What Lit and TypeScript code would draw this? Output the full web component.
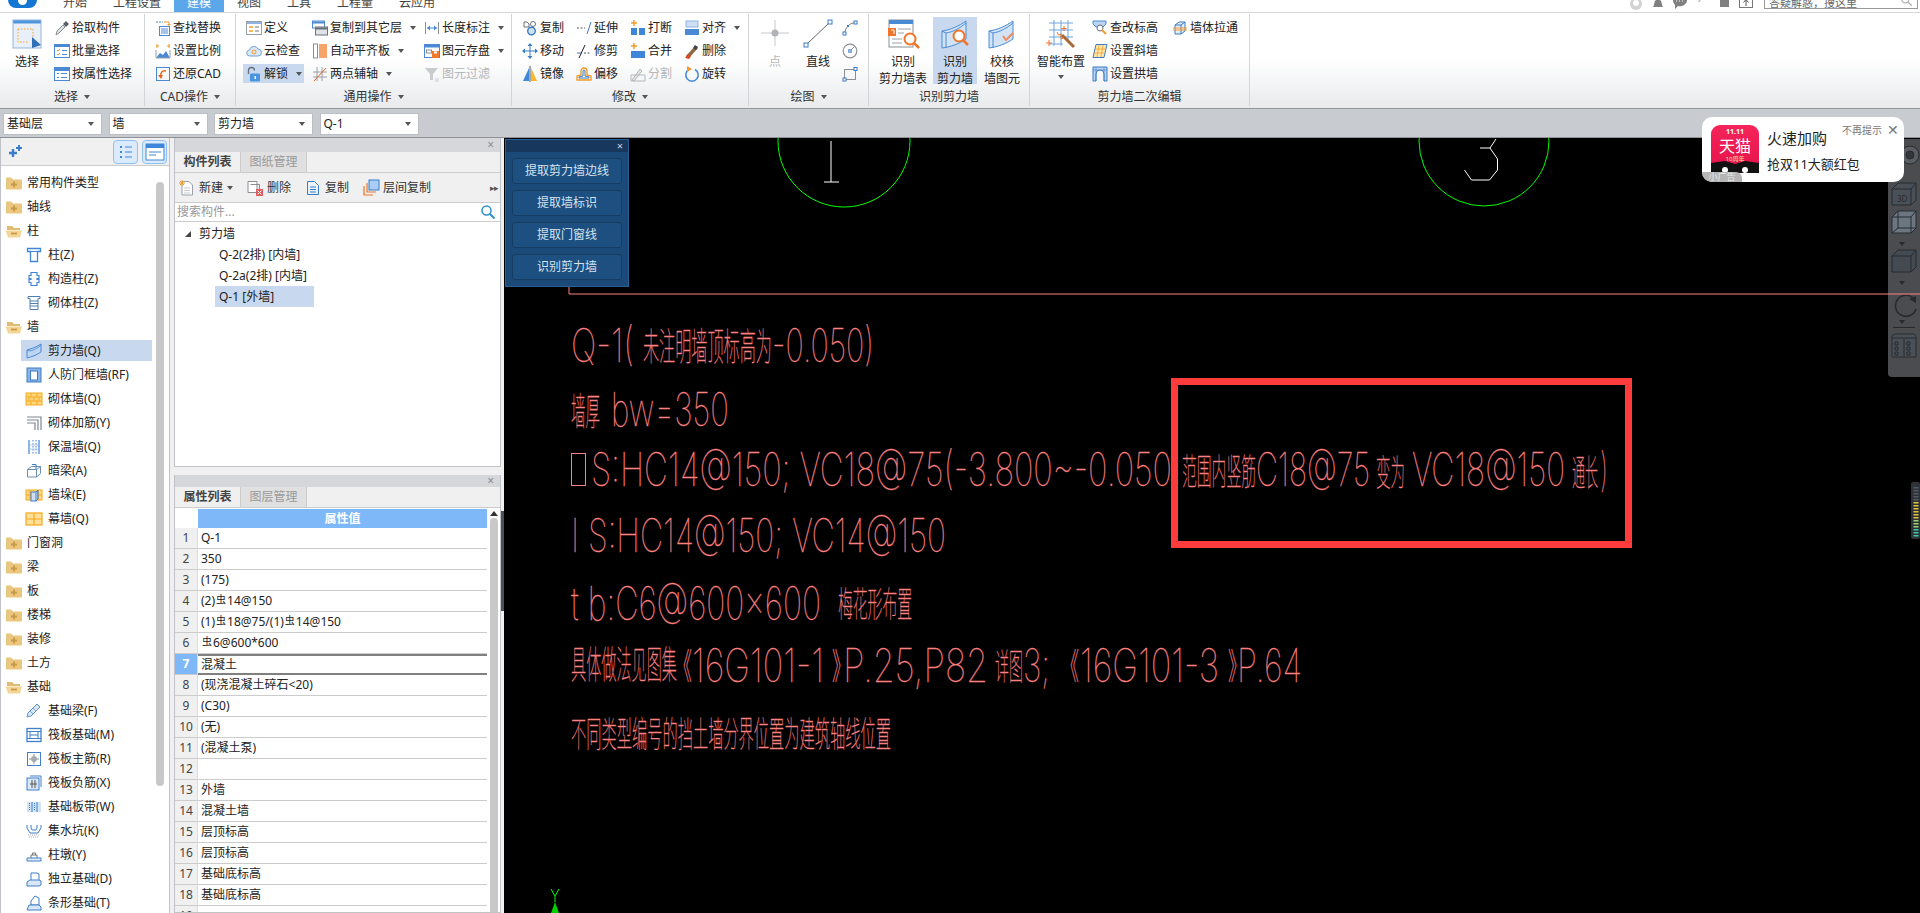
import { LitElement, html, css, svg, TemplateResult } from 'lit';
import { customElement } from 'lit/decorators.js';

const ICONS: Record<string, TemplateResult> = {
    pick: svg`<path d="M2 15l1-4 6-6 2 2-6 6z" fill="#dfe3e8" stroke="#8a8f96"/><path d="M9 4l3-3 3 3-3 3z" fill="#5a5f66"/>`,
    batch: svg`<rect x=".5" y="1.5" width="15" height="13" fill="#fff" stroke="#4a8ad4"/><rect x="1" y="2" width="14" height="2" fill="#4a8ad4"/><path d="M3 7l1 1 2-2M3 11l1 1 2-2" stroke="#f39a2c" fill="none"/><path d="M8 7.5h5M8 11.5h5" stroke="#4a8ad4"/>`,
    attr: svg`<rect x=".5" y="1.5" width="15" height="13" fill="#fff" stroke="#4a8ad4"/><rect x="1" y="2" width="14" height="3" fill="#4a8ad4"/><path d="M3 7.5h2M3 11.5h2M7 7.5h6M7 11.5h6" stroke="#4a8ad4"/>`,
    find: svg`<path d="M1 2h7" stroke="#4a8ad4" stroke-dasharray="2 1"/><path d="M9 2h5v3" stroke="#f39a2c" fill="none"/><path d="M12 4l2 2 2-2" fill="#f39a2c"/><rect x="4.5" y="6.5" width="10" height="9" fill="#fff" stroke="#4a8ad4"/><path d="M6 9h7M6 11h7M6 13h7" stroke="#4a8ad4"/>`,
    scale: svg`<path d="M2 1v4M14 1v4M1 3h3M12 3h3" stroke="#f39a2c"/><path d="M1 15l4-5 3 2 3-4 4 7z" fill="#4a8ad4"/><path d="M1 7v8h14V7" fill="none" stroke="#9aa0a8"/>`,
    restore: svg`<rect x="1.5" y="1.5" width="13" height="13" fill="none" stroke="#4a8ad4"/><path d="M11 5c-4-1-6 2-5 6" fill="none" stroke="#e8641c" stroke-width="1.5"/><path d="M3 9l3 4 2-4z" fill="#e8641c"/>`,
    define: svg`<rect x=".5" y="1.5" width="15" height="13" fill="#fff" stroke="#9aa0a8"/><rect x="1" y="2" width="14" height="2" fill="#8fb4e3"/><rect x="3" y="6" width="4" height="2" fill="#f5b65c"/><rect x="3" y="10" width="4" height="2" fill="#f5b65c"/><path d="M9 7h4M9 11h4" stroke="#777"/>`,
    cloud: svg`<path d="M4 13a3 3 0 0 1-.5-6 4.5 4.5 0 0 1 8.5-1 3.5 3.5 0 0 1 0 7z" fill="#dbe8f7" stroke="#6ea3de"/><circle cx="8" cy="9" r="2" fill="none" stroke="#f39a2c"/>`,
    lock: svg`<path d="M2.5 8V4.5a3 3 0 0 1 6 0" fill="none" stroke="#66717d" stroke-width="1.3"/><rect x="4" y="7.5" width="10" height="8" rx="1" fill="#4a95e0"/><rect x="8.5" y="10" width="1.5" height="3" fill="#fff"/>`,
    copyfloor: svg`<rect x=".5" y="1" width="12" height="7" fill="#fff" stroke="#4a8ad4"/><rect x="1" y="1.5" width="11" height="2" fill="#4a8ad4"/><rect x="3.5" y="7" width="12" height="8" fill="#dfe3e8" stroke="#6b7178"/><rect x="4" y="7.5" width="11" height="2" fill="#6b7178"/>`,
    level: svg`<rect x="1.5" y="1" width="4" height="14" fill="#fff" stroke="#8a8f96"/><rect x="7" y="1" width="8" height="14" fill="#f7a46a"/>`,
    twoaxis: svg`<path d="M1 6h14M1 11h14" stroke="#9aa0a8"/><path d="M5 1v14M10 1v14" stroke="#9aa0a8"/><path d="M2 15L14 2" stroke="#e8641c"/>`,
    dim: svg`<path d="M1.5 2v12M14.5 2v12" stroke="#8a8f96"/><path d="M3 8h10" stroke="#4a8ad4"/><path d="M6 5.5L3 8l3 2.5zM10 5.5L13 8l-3 2.5z" fill="#4a8ad4"/>`,
    save: svg`<rect x=".5" y="1.5" width="15" height="13" fill="#fff" stroke="#4a8ad4"/><rect x="1" y="2" width="14" height="2.5" fill="#4a8ad4"/><rect x="2.5" y="7" width="5" height="3" fill="none" stroke="#8a8f96"/><rect x="8" y="8" width="7" height="7" fill="#f07a2a"/><rect x="10" y="8.5" width="3" height="2" fill="#fff"/>`,
    funnel: svg`<path d="M1 2h13L9 8v6H6V8z" fill="#c9cbce"/><path d="M11 13h4M11 15h4" stroke="#c9cbce"/>`,
    copy: svg`<path d="M2 2h3l2 2v3H2z" fill="none" stroke="#6b7178"/><circle cx="11" cy="4" r="2.5" fill="none" stroke="#6b7178"/><circle cx="9.5" cy="11" r="3.8" fill="#cfe0f5" stroke="#3a7cc8" stroke-width="1.4"/>`,
    move: svg`<path d="M8 2v12M2 8h12" stroke="#3a7cc8"/><path d="M8 0l2.5 3h-5zM8 16l2.5-3h-5zM0 8l3-2.5v5zM16 8l-3-2.5v5z" fill="#3a7cc8"/>`,
    mirror: svg`<path d="M7 2v13H1z" fill="#3f86d8"/><path d="M9 2v13h6z" fill="#f8b62b"/><path d="M8 0v16" stroke="#555"/>`,
    extend: svg`<path d="M1 8h8" stroke="#555" stroke-dasharray="2 1.5"/><path d="M11 14l4-12" stroke="#3a7cc8"/>`,
    trim: svg`<path d="M1 10h5" stroke="#3a7cc8"/><path d="M8 10h7" stroke="#555" stroke-dasharray="2 1.5"/><path d="M3 15l6-13" stroke="#222"/>`,
    offset: svg`<path d="M1 14V10l4-1V5a3 3 0 0 1 6 0v4l4 1v4z" fill="#fff6dd" stroke="#f39a2c" stroke-width="1.3"/><path d="M3 12v-1l4-1V5a1 1 0 0 1 2 0v5l4 1v1z" fill="none" stroke="#3a7cc8"/>`,
    breakit: svg`<path d="M4 0v6M1 3h6" stroke="#f39a2c" stroke-width="1.5"/><rect x="1" y="8" width="6" height="7" fill="#3f86d8"/><rect x="9" y="8" width="6" height="7" fill="#3f86d8"/>`,
    merge: svg`<path d="M4 0v6M1 3h6" stroke="#f39a2c" stroke-width="1.5"/><rect x="1" y="8" width="14" height="7" fill="#3f86d8"/>`,
    split: svg`<path d="M2 14l8-11 2 2-8 10z" fill="#e3e4e6" stroke="#b5b7ba"/><path d="M1 9h14v6H1z" fill="none" stroke="#b5b7ba"/>`,
    align: svg`<rect x="2" y="1" width="12" height="6" fill="#cfe0f5" stroke="#8fb4e3"/><rect x="1" y="9" width="14" height="6" fill="#4a8ad4"/>`,
    erase: svg`<path d="M2 13l9-10 3 2-9 10z" fill="#8a6a48"/><path d="M9 5l2-3 3 2-2 3z" fill="#444"/><path d="M1 15l3-4 3 2-2 3z" fill="#d8481f"/>`,
    rotate: svg`<path d="M5 3.5a6.2 6.2 0 1 0 6 0" fill="none" stroke="#3f86d8" stroke-width="1.5"/><path d="M3 0l5 3-5 3z" fill="#f39a2c"/>`,
    smallarc: svg`<path d="M2.5 14C3 8 7 3 13.5 2.5" fill="none" stroke="#777"/><rect x="1" y="12" width="3" height="3" fill="#fff" stroke="#3a7cc8"/><rect x="12" y="1" width="3" height="3" fill="#fff" stroke="#3a7cc8"/><rect x="5" y="5" width="2" height="2" fill="#3a7cc8"/>`,
    smallcircle: svg`<circle cx="8" cy="8" r="6.8" fill="none" stroke="#8a8f96" stroke-width="1.2"/><path d="M8 8l4-4" stroke="#8a8f96"/><rect x="6.8" y="6.8" width="2.4" height="2.4" fill="#fff" stroke="#3a7cc8"/>`,
    smallrect: svg`<rect x="2.5" y="3.5" width="11" height="10" fill="none" stroke="#8a8f96"/><rect x="12" y="1.5" width="3" height="3" fill="#fff" stroke="#3a7cc8"/><rect x="1" y="12" width="3" height="3" fill="#fff" stroke="#3a7cc8"/>`,
    editlevel: svg`<path d="M1 1h13v3l-3 3H4L1 4z" fill="#bcd5f2" stroke="#4a8ad4"/><circle cx="8" cy="8" r="3" fill="#fff" stroke="#6b7178"/><path d="M10 10l4 4" stroke="#f39a2c" stroke-width="2"/>`,
    slant: svg`<path d="M4 1.5h11l-3 13H1z" fill="#ffe7a8" stroke="#3a7cc8"/><path d="M3 6h10M2 10h10M7 2L5 14M11 2l-2 12" stroke="#f39a2c" stroke-width=".7"/>`,
    arch: svg`<path d="M1 1h14v14h-3V8a4 4 0 0 0-8 0v7H1z" fill="#bcd5f2" stroke="#3a7cc8"/><path d="M4 1v14M12 1v14M1 4h14" stroke="#3a7cc8" stroke-width=".6"/>`,
    pull: svg`<path d="M3 5l4-3h6v9l-4 3H3z" fill="#e6eef9" stroke="#3a7cc8"/><path d="M3 5h6v9M9 5l4-3" fill="none" stroke="#3a7cc8"/><path d="M1 8h14M1 10h14" stroke="#f39a2c"/>`,
    search: svg`<circle cx="6.5" cy="6.5" r="4.5" fill="none" stroke="#2f8ecb" stroke-width="1.5"/><path d="M10 10l4.5 4.5" stroke="#2f8ecb" stroke-width="2"/>`,
    searchgray: svg`<circle cx="6.5" cy="6.5" r="4.5" fill="none" stroke="#aaa" stroke-width="1.3"/><path d="M10 10l4.5 4.5" stroke="#aaa" stroke-width="1.5"/>`,
    newdoc: svg`<path d="M3 1.5h7l3.5 3.5v10H3z" fill="#fff" stroke="#9aa0a8"/><path d="M5 8h6M5 10.5h6M5 13h6" stroke="#c9cbce"/><path d="M3 0v6M0 3h6M1 1l4 4M5 1L1 5" stroke="#f39a2c"/>`,
    deldoc: svg`<path d="M1 1.5h9v11H1z" fill="#fff" stroke="#8a8f96"/><path d="M3.5 4.5h9v9" fill="none" stroke="#8a8f96"/><rect x="9" y="9" width="7" height="7" fill="#e25b5b"/><path d="M10.5 10.5l4 4M14.5 10.5l-4 4" stroke="#fff"/>`,
    copydoc: svg`<path d="M2.5 1.5h7l4 4v9h-11z" fill="#eaf2fb" stroke="#3a7cc8"/><path d="M5 7h6M5 9.5h6M5 12h6" stroke="#3a7cc8"/>`,
    floorcopy: svg`<rect x="6" y="0" width="10" height="10" fill="#a9cdf5" stroke="#3a7cc8"/><path d="M4 3v9h9M1 6v9h9" fill="none" stroke="#e8742a" stroke-width="1.2"/>`,
    closed: svg`<path d="M0 3.5a1 1 0 0 1 1-1h4l2 2h8a1 1 0 0 1 1 1v8a1 1 0 0 1-1 1H1a1 1 0 0 1-1-1z" fill="#eac67e"/><path d="M8 6.5v6M5 9.5h6" stroke="#c89a45" stroke-width="1.8"/>`,
    open: svg`<path d="M1 3h5l2 2h6v2H1z" fill="#e2bb72"/><path d="M-.5 7.5h15l1.5-.5-2 7.5H2z" fill="#f3d596"/><path d="M5 10.5h6" stroke="#c89a45" stroke-width="1.8"/>`,
    column: svg`<path d="M1.5 1.5h13v3h-3v10h-7v-10h-3z" fill="#fff" stroke="#3f86d8" stroke-width="1.3"/><path d="M4.5 4.5h7" stroke="#3f86d8"/>`,
    gouzao: svg`<path d="M5 1.5h6v3h2v3h-2v1h2v3h-2v3H5v-3H3v-3h2v-1H3v-3h2z" fill="#fff" stroke="#3f86d8" stroke-width="1.2"/>`,
    brickcol: svg`<path d="M2 1.5h12v2h-2v11H4v-11H2z" fill="#fff" stroke="#4f7fae"/><path d="M4 6h8M4 8.5h8M4 11h8" stroke="#4f7fae"/>`,
    shear: svg`<path d="M1 7c3-1 10-3 14-6v8c-4 3-10 5-14 6z" fill="#bcd5f2" stroke="#4a8ad4"/><path d="M1 7l3 1c4-1 8-3 11-6" fill="none" stroke="#4a8ad4" stroke-width=".8"/>`,
    defwall: svg`<rect x="1" y="1" width="14" height="14" fill="#8fb4e3" stroke="#3a7cc8"/><rect x="4.5" y="4" width="7" height="9" fill="#fff" stroke="#3a7cc8"/>`,
    brickwall: svg`<rect x="0" y="2" width="16" height="12" fill="#ffd67e" stroke="#f5a81c"/><path d="M0 6h16M0 10h16M5 2v4M11 2v4M8 6v4M3 6v4M13 6v4M5 10v4M11 10v4" stroke="#f5a81c"/>`,
    rebarwall: svg`<path d="M1 2h14v13M1 5h11v10M1 8h8v7" fill="none" stroke="#7d8790" stroke-width="1.2"/>`,
    insul: svg`<path d="M3 1v14M13 1v14" stroke="#3f86d8" stroke-width="1.2"/><path d="M7 1v14M10 1v14" stroke="#3f86d8" stroke-dasharray="1.5 1.5"/><path d="M3 6h10M3 10h10" stroke="#8fb4e3" stroke-width=".7"/>`,
    beam: svg`<path d="M1.5 6.5l4-3h9v7l-4 3.5h-9z" fill="#fff" stroke="#6b8fb4"/><path d="M1.5 6.5h9V14M10.5 6.5l4-3" fill="none" stroke="#6b8fb4"/><path d="M6 1.5l4 0v5" stroke="#3a7cc8" fill="none"/>`,
    duo: svg`<rect x="0" y="3" width="16" height="10" fill="#ffd67e" stroke="#f5a81c"/><path d="M4 3v10M12 3v10M0 8h16" stroke="#f5a81c"/><rect x="5" y="5" width="5" height="9" fill="#cfe0f5" stroke="#3a7cc8"/><path d="M10 5l2-2v9l-2 2" fill="#8fb4e3" stroke="#3a7cc8"/>`,
    curtain: svg`<rect x="0" y="2" width="16" height="12" fill="#ffe09a" stroke="#f5a81c" stroke-width="1.2"/><path d="M0 8h16M8 2v12" stroke="#f5a81c" stroke-width="1.2"/>`,
    found: svg`<path d="M2 10L11 1l3 3-9 9-4 1z" fill="#d9e7f7" stroke="#5a94d8"/><path d="M4 8l3 3M7 5l3 3" stroke="#5a94d8" stroke-width=".7"/>`,
    raft: svg`<rect x="1" y="1.5" width="14" height="13" fill="none" stroke="#3f7fcb" stroke-width="1.3"/><rect x="4" y="4.5" width="8" height="7" fill="none" stroke="#3f7fcb"/><path d="M1 4.5h3M12 4.5h3M1 11.5h3M12 11.5h3M4 8h8" stroke="#3f7fcb"/>`,
    raftmain: svg`<rect x="1.5" y="1.5" width="13" height="13" fill="#fff" stroke="#3f7fcb"/><path d="M8 3v10M3 8h10" stroke="#8a8f96"/><path d="M6 6h4v4H6z" fill="none" stroke="#8a8f96"/>`,
    raftneg: svg`<rect x="1" y="3" width="12" height="12" fill="#d9e7f7" stroke="#3f7fcb"/><path d="M4 1h11v11" fill="none" stroke="#3f7fcb"/><path d="M4 9h7M6 5v8M9 5v8" stroke="#555"/>`,
    strip: svg`<rect x="1" y="3" width="14" height="10" fill="#d3e3f6"/><path d="M6 3v10M11 3v10" stroke="#3f7fcb"/><path d="M8.5 4v8" stroke="#3f7fcb" stroke-dasharray="1 1"/><path d="M3.5 4v8" stroke="#3f7fcb" stroke-dasharray="1 1"/>`,
    pit: svg`<path d="M1 2v3l3 5h8l3-5V2M5 2v3l1 2h4l1-2V2" fill="none" stroke="#3f7fcb"/><path d="M2 12h12M3 14h10" stroke="#aaa" stroke-dasharray="1 1"/>`,
    pier: svg`<path d="M1 11h14v3H1z" fill="#e5eefa" stroke="#3f7fcb"/><path d="M5 11V8h6v3M6.5 8V6h3v2" fill="none" stroke="#777"/>`,
    isolated: svg`<path d="M5 2h6l2 1v7H5z" fill="#fff" stroke="#3f7fcb"/><path d="M1 11l3-2h9l2 1v4l-2 1H1z" fill="#d9e7f7" stroke="#3f7fcb"/>`,
    stripf: svg`<path d="M5 6l4-5 4 2v7H5z" fill="#fff" stroke="#3f7fcb"/><path d="M1 15l2-5h10l2 2v3z" fill="#d9e7f7" stroke="#3f7fcb"/>`,
    spark: svg`<path d="M2 9h8M6 5v8" stroke="#3a7cc8" stroke-width="2.4"/><path d="M9 4h6M12 1v6" stroke="#3a7cc8" stroke-width="2"/>`,
    listview: svg`<path d="M4 5h2M4 10h2M4 15h2" stroke="#3f86d8" stroke-width="2"/><path d="M9 5h7M9 10h7M9 15h7" stroke="#3f86d8" stroke-width="1.2"/>`,
    formview: svg`<rect x="1" y="2" width="18" height="16" fill="#fff" stroke="#3f86d8"/><rect x="1" y="2" width="18" height="4" fill="#3f86d8"/><path d="M4 10h12M4 13h7" stroke="#3f86d8"/>`,
    person: svg`<circle cx="8" cy="9" r="6" fill="#d2d2d2"/><circle cx="8" cy="8" r="3" fill="#fff"/>`,
    bell: svg`<path d="M3 12c1-1 1-4 2-6s5-2 6 0 1 5 2 6z" fill="#808080"/>`,
    chat: svg`<path d="M1 6a7 6 0 0 1 14 0 7 6 0 0 1-9 5l-3 3v-4a6 6 0 0 1-2-4z" fill="#808080"/><path d="M4 6h8" stroke="#fff" stroke-dasharray="1 2"/>`,
    help: svg`<path d="M2 2c1-2 5-2 5 1 0 2-2 2-2 4" fill="none" stroke="#bbb" stroke-width="1.5"/><path d="M9 1h6l-3 4z" fill="#888"/>`,
    note: svg`<rect x="4" y="0" width="9" height="12" fill="#808080"/>`,
    upload: svg`<rect x="1.5" y="1.5" width="13" height="11" fill="#fff" stroke="#777"/><path d="M8 11V5M5.5 7.5L8 4.5l2.5 3" fill="none" stroke="#555"/>`,
};

const BIG: Record<string, TemplateResult> = {
    select: svg`<rect x="1" y="1" width="28" height="28" fill="#e9eff8"/><rect x="1" y="1" width="28" height="3.5" fill="#4d96de"/><rect x="1" y="1" width="28" height="28" fill="none" stroke="#93b5de"/><path d="M6 10h15v13" fill="none" stroke="#f5a623" stroke-dasharray="1.5 1.5"/><path d="M6 10v13h10" fill="none" stroke="#f5a623" stroke-dasharray="1.5 1.5"/><path d="M20 18l9 8-9 3z" fill="#2f6fb8"/>`,
    point: svg`<path d="M15 1v26M1 14h28" stroke="#c6c8cb"/><circle cx="15" cy="14" r="3.5" fill="#b0b2b5"/>`,
    line: svg`<path d="M3 26L27 3" stroke="#666"/><rect x="1" y="24" width="4" height="4" fill="#fff" stroke="#3a7cc8"/><rect x="25" y="1" width="4" height="4" fill="#fff" stroke="#3a7cc8"/>`,
    table: svg`<rect x="1" y="1" width="24" height="27" fill="#fff" stroke="#8a8f96"/><rect x="1" y="1" width="24" height="4" fill="#4a8ad4"/><rect x="0" y="9" width="8" height="8" fill="#f0742a"/><path d="M3 11h3v4" stroke="#fff" fill="none"/><path d="M10 10h13M10 14h6M4 20h10M4 24h10" stroke="#9aa0a8"/><circle cx="22" cy="20" r="5.5" fill="#fff" stroke="#f0742a" stroke-width="2"/><path d="M26 24l5 5" stroke="#f0742a" stroke-width="2.5"/>`,
    wall: svg`<path d="M2 12c8-1 17-5 24-10v18c-7 5-16 8-24 9z" fill="#d3e3f6" stroke="#4a8ad4"/><path d="M2 12l4 2c7-1 14-5 20-10M6 14v15" fill="none" stroke="#4a8ad4"/><circle cx="19" cy="17" r="5.5" fill="#fff" stroke="#f0742a" stroke-width="2"/><path d="M23 21l5 5" stroke="#f0742a" stroke-width="2.5"/>`,
    check: svg`<path d="M2 12c8-1 17-5 24-10v18c-7 5-16 8-24 9z" fill="#d3e3f6" stroke="#4a8ad4"/><path d="M2 12l4 2c7-1 14-5 20-10M6 14v15" fill="none" stroke="#4a8ad4"/><path d="M16 17l3 4 7-7" fill="none" stroke="#f08a5a" stroke-width="2"/>`,
    smart: svg`<path d="M3 4h24M3 11h24M3 18h24M3 25h14M8 1v26M15 1v26M22 1v20" stroke="#6fa5df"/><path d="M16 16l12 12" stroke="#a56a35" stroke-width="3"/><path d="M11 13l1.5 3 3-1-1 3 3 1-3 1" fill="none" stroke="#f0742a"/><path d="M3 21v6M0 24h6M18 7v5M15.5 9.5h5" stroke="#f0742a"/>`,
};

const ic = (name: string) => html`<svg class="ic" viewBox="0 0 16 16">${ICONS[name]}</svg>`;
const big = (name: string) => html`<svg class="bigic" viewBox="0 0 30 30">${BIG[name]}</svg>`;
const caret = html`<i class="caret"></i>`;

interface Tool { icon: string; label: string; arrow?: boolean; off?: boolean; hot?: boolean }
const tool = (t: Tool) => html`<div class="tool ${t.off ? 'off' : ''} ${t.hot ? 'hot' : ''}">
    ${ic(t.icon)}<span>${t.label}</span>${t.arrow ? caret : ''}
</div>`;
const stack = (tools: Tool[]) => html`<div class="stack">${tools.map(tool)}</div>`;
const bigBtn = (icon: string, lines: string[], cls = '') => html`<div class="big ${cls}">
    ${big(icon)}${lines.map((l) => html`<span>${l}</span>`)}
</div>`;

const TREE: [string, string, string][] = [
    ['closed', 'closed', '常用构件类型'], ['closed', 'closed', '轴线'], ['open', 'open', '柱'],
    ['child', 'column', '柱(Z)'], ['child', 'gouzao', '构造柱(Z)'], ['child', 'brickcol', '砌体柱(Z)'],
    ['open', 'open', '墙'], ['child active', 'shear', '剪力墙(Q)'], ['child', 'defwall', '人防门框墙(RF)'],
    ['child', 'brickwall', '砌体墙(Q)'], ['child', 'rebarwall', '砌体加筋(Y)'], ['child', 'insul', '保温墙(Q)'],
    ['child', 'beam', '暗梁(A)'], ['child', 'duo', '墙垛(E)'], ['child', 'curtain', '幕墙(Q)'],
    ['closed', 'closed', '门窗洞'], ['closed', 'closed', '梁'], ['closed', 'closed', '板'],
    ['closed', 'closed', '楼梯'], ['closed', 'closed', '装修'], ['closed', 'closed', '土方'],
    ['open', 'open', '基础'], ['child', 'found', '基础梁(F)'], ['child', 'raft', '筏板基础(M)'],
    ['child', 'raftmain', '筏板主筋(R)'], ['child', 'raftneg', '筏板负筋(X)'], ['child', 'strip', '基础板带(W)'],
    ['child', 'pit', '集水坑(K)'], ['child', 'pier', '柱墩(Y)'], ['child', 'isolated', '独立基础(D)'],
    ['child', 'stripf', '条形基础(T)'],
];

const bar = html`<span class="rebar">虫</span>`;
const PROPS: unknown[] = [
    'Q-1', '350', '(175)', html`(2)${bar}14@150`, html`(1)${bar}18@75/(1)${bar}14@150`, html`${bar}6@600*600`,
    '混凝土', '(现浇混凝土碎石<20)', '(C30)', '(无)', '(混凝土泵)', '', '外墙', '混凝土墙', '层顶标高',
    '层顶标高', '基础底标高', '基础底标高', '',
];

// [text, x0, x1, baseline, font size, cjk]
const CAD: [string, number, number, number, number, boolean][] = [
    ['Q-1(', 571, 634, 362, 46, false],
    ['未注明墙顶标高为', 643, 772, 360, 38, true],
    ['-0.050)', 772, 874, 362, 46, false],
    ['墙厚', 571, 600, 425, 38, true],
    ['bw=350', 611, 729, 426, 46, false],
    ['S:HC14@150; VC18@75(-3.800~-0.050', 591, 1172, 486, 46, false],
    ['范围内竖筋', 1182, 1256, 485, 36, true],
    ['C18@75', 1256, 1370, 486, 46, false],
    ['变为', 1376, 1405, 486, 36, true],
    ['VC18@150', 1412, 1565, 486, 46, false],
    ['通长', 1572, 1598, 486, 36, true],
    [')', 1600, 1608, 486, 46, false],
    ['I S:HC14@150; VC14@150', 571, 946, 552, 46, false],
    ['t b:C6@600x600', 571, 821, 620, 46, false],
    ['梅花形布置', 838, 912, 617, 35, true],
    ['具体做法见图集', 571, 677, 678, 38, true],
    ['《', 674, 692, 680, 36, true],
    ['16G101-1', 692, 824, 682, 46, false],
    ['》', 832, 850, 680, 36, true],
    ['P.25,P82', 843, 988, 682, 46, false],
    ['详图', 995, 1023, 680, 36, true],
    ['3;', 1023, 1050, 682, 46, false],
    ['《', 1061, 1079, 680, 36, true],
    ['16G101-3', 1080, 1219, 682, 46, false],
    ['》', 1228, 1246, 680, 36, true],
    ['P.64', 1237, 1302, 682, 46, false],
    ['不同类型编号的挡土墙分界位置为建筑轴线位置', 571, 891, 747, 35, true],
];

@customElement('app-root')
export class AppRoot extends LitElement {
    static override styles = css`
        :host {
            display: block;
            position: relative;
            width: 1920px;
            height: 913px;
            overflow: hidden;
            font: 12px/16px "Noto Sans", "Noto Sans CJK SC", sans-serif;
            color: #222;
            background: #f0f0f0;
        }
        .ic { width: 16px; height: 16px; flex: none; overflow: visible; }
        .bigic { width: 30px; height: 30px; flex: none; margin-bottom: 4px; overflow: visible; }
        .caret {
            display: inline-block;
            margin-left: 6px;
            border: 3px solid transparent;
            border-top: 4px solid #555;
            border-bottom: 0;
            flex: none;
        }

        .tabbar {
            display: flex;
            height: 12px;
            background: #fff;
            border-bottom: 1px solid #d6d6d6;
            overflow: hidden;
        }
        .logo {
            width: 29px;
            height: 8px;
            margin: 0 13px 0 8px;
            background: #1677d2;
            border-radius: 0 0 8px 8px;
            position: relative;
        }
        .logo::after {
            content: '';
            position: absolute;
            left: 10px;
            top: -4px;
            width: 9px;
            height: 9px;
            border-radius: 50%;
            background: #fff;
        }
        .tab { padding: 0 13px; line-height: 6px; height: 12px; color: #444; }
        .tab.on { background: #5ba7ea; color: #fff; }
        .tray { margin-left: auto; display: flex; gap: 6px; }
        .tray .ic { margin-top: -5px; }
        .ask {
            width: 154px;
            height: 9px;
            margin: 0 2px 0 4px;
            border: 1px solid #999;
            border-top: 0;
            box-sizing: border-box;
            padding: 0 4px;
            font-size: 11px;
            line-height: 6px;
            color: #666;
            display: flex;
            justify-content: space-between;
            white-space: nowrap;
        }
        .ask .ic { width: 13px; height: 13px; margin-top: -6px; }

        .ribbon {
            display: flex;
            height: 95px;
            background: linear-gradient(#fff 0, #fff 48%, #e8eaec 100%);
            border-bottom: 1px solid #94979b;
        }
        .group {
            box-sizing: border-box;
            border-right: 1px solid #d3d6d9;
            margin: 1px 0 2px;
            display: flex;
            flex-direction: column;
        }
        .body { display: grid; height: 74px; flex: none; padding-top: 2px; box-sizing: border-box; }
        .label {
            height: 18px;
            flex: none;
            line-height: 18px;
            display: flex;
            justify-content: center;
            align-items: center;
            color: #333;
        }
        .g1 { width: 145px; }
        .g1 .body { grid-template-columns: 54px 1fr; }
        .g2 { width: 91px; }
        .g2 .body { grid-template-columns: 1fr; padding-left: 10px; }
        .g3 { width: 276px; }
        .g3 .body { grid-template-columns: 66px 112px 1fr; padding-left: 10px; }
        .g4 { width: 237px; }
        .g4 .body { grid-template-columns: 54px 54px 54px 1fr; padding-left: 10px; }
        .g5 { width: 120px; }
        .g5 .body { grid-template-columns: 52px 34px 1fr; }
        .g5 .stack { padding-left: 7px; }
        .g6 { width: 161px; }
        .g6 .body { grid-template-columns: 52px 48px 50px; padding-left: 8px; }
        .g7 { width: 220px; }
        .g7 .body { grid-template-columns: 62px 80px 1fr; }
        .stack { display: flex; flex-direction: column; }
        .tool { display: flex; align-items: center; gap: 2px; height: 23px; white-space: nowrap; }
        .tool.off { color: #b4b6b9; }
        .tool.hot {
            position: relative;
            background: #c8d9ef;
            margin: 2px 0 0 -3px;
            padding-left: 3px;
            width: 58px;
            height: 19px;
        }
        .big {
            display: flex;
            flex-direction: column;
            align-items: center;
            padding-top: 2px;
            margin-top: 1px;
            height: 67px;
            box-sizing: border-box;
            line-height: 17px;
            white-space: nowrap;
        }
        .big.off { color: #b4b6b9; }
        .big.hot { background: #c8d9ef; margin-left: 4px; }
        .big .caret { margin: 5px 0 0; }

        .ctlbar {
            display: flex;
            gap: 6.5px;
            height: 29px;
            padding: 4px 0 0 3px;
            box-sizing: border-box;
            background: #c8ccd0;
            border-bottom: 1px solid #8f9296;
        }
        .combo {
            width: 99px;
            height: 22px;
            box-sizing: border-box;
            background: #fff;
            border: 1px solid #bbbec2;
            padding: 0 7px 0 3px;
            display: flex;
            align-items: center;
            justify-content: space-between;
        }
        .combo .caret { margin: 0; }

        .main { display: flex; height: 775px; }
        .side {
            width: 170px;
            flex: none;
            background: #fff;
            box-sizing: border-box;
            border-left: 1px solid #bfc2c6;
            border-right: 1px solid #bfc2c6;
            position: relative;
            overflow: hidden;
        }
        .sidehead {
            height: 28px;
            box-sizing: border-box;
            background: #f0f0f0;
            border-bottom: 1px solid #ccc;
            display: flex;
            align-items: center;
            padding: 0 2px 0 6px;
        }
        .viewbtn {
            width: 25px;
            height: 24px;
            box-sizing: border-box;
            border: 1px solid #8fc0f2;
            border-radius: 4px;
            background: #dcebfb;
            display: flex;
            align-items: center;
            justify-content: center;
            margin-left: 4px;
        }
        .viewbtn:first-of-type { margin-left: auto; }
        .viewbtn .ic { width: 20px; height: 20px; }
        .tree { padding-top: 5px; }
        .node { height: 24px; display: flex; align-items: center; gap: 5px; padding-left: 5px; white-space: nowrap; }
        .node.child { padding-left: 25px; gap: 6px; }
        .node.active { position: relative; }
        .node.active::before {
            content: '';
            position: absolute;
            left: 20px;
            top: 1px;
            width: 131px;
            height: 21px;
            background: #c8d9ef;
        }
        .node > * { position: relative; }
        .thumb {
            position: absolute;
            left: 155px;
            top: 44px;
            width: 8px;
            height: 604px;
            border-radius: 4px;
            background: #c8c8c8;
        }

        .mid {
            width: 334px;
            flex: none;
            padding: 0 3px 0 4px;
            box-sizing: border-box;
            display: flex;
            flex-direction: column;
            gap: 8px;
            position: relative;
        }
        .panel {
            background: #fff;
            border: 1px solid #bfc2c6;
            border-top: 0;
            display: flex;
            flex-direction: column;
            overflow: hidden;
        }
        .panel.top { height: 328px; flex: none; }
        .panel.low { flex: 1; }
        .title {
            height: 14px;
            flex: none;
            background: #d5d7da;
            color: #8a8d91;
            text-align: right;
            padding-right: 6px;
            font-size: 12px;
            line-height: 13px;
        }
        .low .title { height: 12px; line-height: 12px; }
        .tabs { display: flex; height: 21px; box-sizing: border-box; flex: none; background: #f0f0f0; border-bottom: 1px solid #ccc; }
        .ptab { width: 65px; text-align: center; line-height: 20px; font-weight: 700; color: #444; }
        .ptab.dim { background: #e0e0e0; color: #9a9a9a; font-weight: 400; border-left: 1px solid #ccc; border-right: 1px solid #ccc; }
        .ptools {
            display: flex;
            align-items: center;
            height: 30px;
            box-sizing: border-box;
            flex: none;
            background: #f0f0f0;
            border-bottom: 1px solid #ccc;
            padding-left: 4px;
            color: #333;
        }
        .ptools .tool { gap: 4px; margin-right: 14px; }
        .ptools .tool .caret { margin-left: 0; }
        .ptools .more { margin-left: auto; padding-right: 2px; font-size: 9px; color: #555; letter-spacing: -1px; }
        .psearch {
            display: flex;
            align-items: center;
            justify-content: space-between;
            height: 19px;
            flex: none;
            padding: 0 4px 0 2px;
            box-sizing: border-box;
            border-bottom: 1px solid #ccc;
            color: #999;
        }
        .ptree { padding-top: 1px; }
        .leaf { height: 21px; line-height: 21px; white-space: nowrap; }
        .leaf.root { display: flex; align-items: center; padding-left: 10px; gap: 8px; }
        .leaf.root::before { content: ''; border: 3px solid transparent; border-right-color: #444; border-bottom-color: #444; }
        .leaf.sub { padding-left: 44px; }
        .leaf.sel { width: 99px; box-sizing: border-box; margin-left: 40px; padding-left: 4px; background: #c8d9ef; }
        .grid { display: flex; flex: 1; min-height: 0; }
        .table { width: 312px; flex: none; }
        .rowh { display: grid; grid-template-columns: 23px 1fr; height: 19px; margin-top: 1px; }
        .rowh b { background: #7fb8f8; color: #fff; text-align: center; line-height: 19px; }
        .rowp { display: grid; grid-template-columns: 23px 1fr; height: 21px; box-sizing: border-box; }
        .num {
            background: #f0f0f0;
            border-bottom: 1px solid #ccc;
            border-right: 1px solid #ddd;
            text-align: center;
            line-height: 20px;
            color: #444;
        }
        .cell { border-bottom: 1px solid #ccc; padding-left: 3px; line-height: 20px; white-space: nowrap; overflow: hidden; }
        .rowp.sel .num { background: #7fb8f8; color: #fff; font-weight: 700; }
        .rowp.sel .cell { border-top: 2px solid #808080; border-bottom: 2px solid #808080; line-height: 17px; }
        .rebar { font-size: 10px; position: relative; top: -2px; padding: 0 1px; }
        .pscroll { flex: 1; position: relative; }
        .pscroll::before {
            content: '';
            position: absolute;
            left: 3px;
            top: 3px;
            border: 4px solid transparent;
            border-bottom: 5px solid #333;
            border-top: 0;
        }
        .pscroll::after {
            content: '';
            position: absolute;
            left: 3px;
            top: 10px;
            bottom: 0;
            width: 8px;
            border-radius: 4px 4px 0 0;
            background: #c8c8c8;
        }
        .grip {
            position: absolute;
            right: 0;
            top: 373px;
            width: 3px;
            height: 100px;
            background: #4b5158;
        }

        .canvas { flex: 1; background: #000; position: relative; overflow: hidden; }
        .drawing { position: absolute; left: 0; top: 0; width: 1416px; height: 775px; }
        .cad {
            fill: #ff8080;
            stroke: #ff8080;
            stroke-width: .3px;
            font-family: Inter, "Liberation Sans", sans-serif;
            font-weight: 100;
        }
        .cad.cjk { font-family: "Noto Sans CJK SC", sans-serif; font-weight: 100; }
        .float {
            position: absolute;
            left: 1px;
            top: 1px;
            width: 124px;
            height: 148px;
            box-sizing: border-box;
            background: #1c4a78;
            border: 1px solid #2a6098;
            display: flex;
            flex-direction: column;
            align-items: center;
        }
        .floathead {
            align-self: stretch;
            height: 12px;
            background: #17375c;
            color: #c8d4e0;
            text-align: right;
            padding-right: 5px;
            line-height: 12px;
            font-size: 11px;
            margin-bottom: 6px;
        }
        .fbtn {
            width: 110px;
            height: 26px;
            box-sizing: border-box;
            margin-bottom: 6px;
            background: #1d4f80;
            border: 1px solid #173c63;
            border-radius: 3px;
            color: #d5e3ef;
            text-align: center;
            line-height: 24px;
        }
        .toast {
            position: absolute;
            left: 1702px;
            top: 117px;
            width: 202px;
            height: 65px;
            background: #fff;
            border-radius: 10px;
            overflow: hidden;
            display: flex;
            padding: 8px 0 0 9px;
            box-sizing: border-box;
            color: #222;
        }
        .toast .logoapp { width: 48px; height: 48px; flex: none; }
        .toast .copy { margin-left: 8px; display: flex; flex-direction: column; }
        .toast .head { font-size: 15px; line-height: 20px; margin-top: 3px; }
        .toast .sub { font-size: 13px; line-height: 18px; margin-top: 7px; }
        .dismiss {
            position: absolute;
            right: 5px;
            top: 5px;
            display: flex;
            gap: 5px;
            font-size: 10px;
            line-height: 16px;
            color: #777;
        }
        .dismiss b { font-size: 14px; font-weight: 400; }
        .adtag {
            position: absolute;
            left: 0;
            bottom: 0;
            width: 40px;
            height: 10px;
            background: #b5b5b5;
            border-radius: 0 6px 0 0;
            color: #e8e8e8;
            font-size: 9px;
            line-height: 10px;
            text-align: center;
        }
        .viewbar {
            position: absolute;
            left: 1384px;
            top: 1px;
            width: 32px;
            height: 238px;
            background: #4a4c50;
            border-radius: 4px 0 0 4px;
        }
        .viewbar svg { display: block; }
        .meter { position: absolute; left: 1407px; top: 344px; width: 9px; height: 57px; }
    `;

    private cadText() {
        return CAD.map(([t, x0, x1, base, size, cjk]) => svg`<text class="cad ${cjk ? 'cjk' : ''}" x=${x0} y=${base}
            font-size=${size} textLength=${x1 - x0} lengthAdjust="spacingAndGlyphs">${t}</text>`);
    }

    private meterBars() {
        const out: TemplateResult[] = [];
        for (let i = 0; i < 17; i++) {
            const c = i < 5 ? '#555b64' : i < 11 ? '#e3c33a' : i < 14 ? '#9ad36a' : '#3fc7a8';
            out.push(svg`<rect x="2.5" y=${5 + i * 3} width="5" height="1.5" fill=${c}/>`);
        }
        return out;
    }

    override render() {
        return html`
            <div class="tabbar">
                <div class="logo"></div>
                ${['开始', '工程设置', '建模', '视图', '工具', '工程量', '云应用'].map(
                    (t) => html`<div class="tab ${t === '建模' ? 'on' : ''}">${t}</div>`,
                )}
                <div class="tray">
                    ${['person', 'bell', 'chat', 'help', 'note', 'upload'].map(ic)}
                    <div class="ask"><span>答疑解惑，搜这里</span>${ic('searchgray')}</div>
                </div>
            </div>

            <div class="ribbon">
                <div class="group g1">
                    <div class="body">
                        ${bigBtn('select', ['选择'])}
                        ${stack([
                            { icon: 'pick', label: '拾取构件' },
                            { icon: 'batch', label: '批量选择' },
                            { icon: 'attr', label: '按属性选择' },
                        ])}
                    </div>
                    <div class="label">选择${caret}</div>
                </div>
                <div class="group g2">
                    <div class="body">
                        ${stack([
                            { icon: 'find', label: '查找替换' },
                            { icon: 'scale', label: '设置比例' },
                            { icon: 'restore', label: '还原CAD' },
                        ])}
                    </div>
                    <div class="label">CAD操作${caret}</div>
                </div>
                <div class="group g3">
                    <div class="body">
                        ${stack([
                            { icon: 'define', label: '定义' },
                            { icon: 'cloud', label: '云检查' },
                            { icon: 'lock', label: '解锁', arrow: true, hot: true },
                        ])}
                        ${stack([
                            { icon: 'copyfloor', label: '复制到其它层', arrow: true },
                            { icon: 'level', label: '自动平齐板', arrow: true },
                            { icon: 'twoaxis', label: '两点辅轴', arrow: true },
                        ])}
                        ${stack([
                            { icon: 'dim', label: '长度标注', arrow: true },
                            { icon: 'save', label: '图元存盘', arrow: true },
                            { icon: 'funnel', label: '图元过滤', off: true },
                        ])}
                    </div>
                    <div class="label">通用操作${caret}</div>
                </div>
                <div class="group g4">
                    <div class="body">
                        ${stack([
                            { icon: 'copy', label: '复制' },
                            { icon: 'move', label: '移动' },
                            { icon: 'mirror', label: '镜像' },
                        ])}
                        ${stack([
                            { icon: 'extend', label: '延伸' },
                            { icon: 'trim', label: '修剪' },
                            { icon: 'offset', label: '偏移' },
                        ])}
                        ${stack([
                            { icon: 'breakit', label: '打断' },
                            { icon: 'merge', label: '合并' },
                            { icon: 'split', label: '分割', off: true },
                        ])}
                        ${stack([
                            { icon: 'align', label: '对齐', arrow: true },
                            { icon: 'erase', label: '删除' },
                            { icon: 'rotate', label: '旋转' },
                        ])}
                    </div>
                    <div class="label">修改${caret}</div>
                </div>
                <div class="group g5">
                    <div class="body">
                        ${bigBtn('point', ['点'], 'off')}
                        ${bigBtn('line', ['直线'])}
                        <div class="stack">
                            ${['smallarc', 'smallcircle', 'smallrect'].map((n) => html`<div class="tool">${ic(n)}</div>`)}
                        </div>
                    </div>
                    <div class="label">绘图${caret}</div>
                </div>
                <div class="group g6">
                    <div class="body">
                        ${bigBtn('table', ['识别', '剪力墙表'])}
                        ${bigBtn('wall', ['识别', '剪力墙'], 'hot')}
                        ${bigBtn('check', ['校核', '墙图元'])}
                    </div>
                    <div class="label">识别剪力墙</div>
                </div>
                <div class="group g7">
                    <div class="body">
                        <div class="big">${big('smart')}<span>智能布置</span>${caret}</div>
                        ${stack([
                            { icon: 'editlevel', label: '查改标高' },
                            { icon: 'slant', label: '设置斜墙' },
                            { icon: 'arch', label: '设置拱墙' },
                        ])}
                        ${stack([{ icon: 'pull', label: '墙体拉通' }])}
                    </div>
                    <div class="label">剪力墙二次编辑</div>
                </div>
            </div>

            <div class="ctlbar">
                ${['基础层', '墙', '剪力墙', 'Q-1'].map((c) => html`<div class="combo"><span>${c}</span>${caret}</div>`)}
            </div>

            <div class="main">
                <div class="side">
                    <div class="sidehead">
                        ${ic('spark')}
                        <div class="viewbtn"><svg class="ic" viewBox="0 0 20 20">${ICONS.listview}</svg></div>
                        <div class="viewbtn"><svg class="ic" viewBox="0 0 20 20">${ICONS.formview}</svg></div>
                    </div>
                    <div class="tree">
                        ${TREE.map(([cls, icon, label]) => html`<div class="node ${cls}">${ic(icon)}<span>${label}</span></div>`)}
                    </div>
                    <div class="thumb"></div>
                </div>

                <div class="mid">
                    <div class="panel top">
                        <div class="title">×</div>
                        <div class="tabs"><div class="ptab">构件列表</div><div class="ptab dim">图纸管理</div></div>
                        <div class="ptools">
                            ${tool({ icon: 'newdoc', label: '新建', arrow: true })}
                            ${tool({ icon: 'deldoc', label: '删除' })}
                            ${tool({ icon: 'copydoc', label: '复制' })}
                            ${tool({ icon: 'floorcopy', label: '层间复制' })}
                            <span class="more">▸▸</span>
                        </div>
                        <div class="psearch"><span>搜索构件...</span>${ic('search')}</div>
                        <div class="ptree">
                            <div class="leaf root">剪力墙</div>
                            <div class="leaf sub">Q-2(2排) [内墙]</div>
                            <div class="leaf sub">Q-2a(2排) [内墙]</div>
                            <div class="leaf sel">Q-1 [外墙]</div>
                        </div>
                    </div>
                    <div class="panel low">
                        <div class="title">×</div>
                        <div class="tabs"><div class="ptab">属性列表</div><div class="ptab dim">图层管理</div></div>
                        <div class="grid">
                            <div class="table">
                                <div class="rowh"><span></span><b>属性值</b></div>
                                ${PROPS.map((p, i) => html`<div class="rowp ${i === 6 ? 'sel' : ''}">
                                    <div class="num">${i + 1}</div><div class="cell">${p}</div>
                                </div>`)}
                            </div>
                            <div class="pscroll"></div>
                        </div>
                    </div>
                    <div class="grip"></div>
                </div>

                <div class="canvas">
                    <div class="viewbar">
                        <svg width="32" height="238" viewBox="0 0 32 238" fill="none" stroke="#262a30">
                            <circle cx="22" cy="16" r="9" fill="#5a5d62"/><circle cx="22" cy="16" r="4" fill="#33363b"/>
                            <path d="M4 50l6-6h18v17l-5 5H4z M4 50h19v16 M23 50l5-6" fill="#4a5058"/>
                            <text x="9" y="63" font-size="8" fill="#262a30" stroke="none">3D</text>
                            <path d="M4 78l6-6h18v17l-5 5H4z M4 78h19v16 M23 78l5-6" fill="#6b7680"/>
                            <path d="M10 72v17h18M10 89l-6 5" />
                            <path d="M11 103h6l-3 4z" fill="#262a30" stroke="none"/>
                            <path d="M4 117l6-6h18v17l-5 5H4z M4 117h19v16 M23 117l5-6" fill="#444a52"/>
                            <path d="M11 142h6l-3 4z" fill="#262a30" stroke="none"/>
                            <path d="M26 160a10.5 10.5 0 1 0 2 10" stroke-width="1.6"/>
                            <path d="M21 160l7-3v7z" fill="#262a30" stroke="none"/>
                            <path d="M11 181h6l-3 4z" fill="#262a30" stroke="none"/>
                            <path d="M5 188.5h22" />
                            <path d="M4 197l3-2h19l2 2v21H4z M4 199h24 M16 200v17" fill="#4a5058"/>
                            <path d="M7 203h3v3H7zM7 208h3v3H7zM7 213h3v3H7zM19 203h3v3h-3zM19 208h3v3h-3zM19 213h3v3h-3z"/>
                        </svg>
                    </div>
                    <div class="meter">
                        <svg width="9" height="57" viewBox="0 0 9 57"><rect width="9" height="57" rx="2" fill="#2d3138"/>${this.meterBars()}</svg>
                    </div>
                    <svg class="drawing" viewBox="504 138 1416 775" fill="none">
                        <circle cx="844" cy="141" r="66" stroke="#00ff00"/>
                        <circle cx="1484" cy="141" r="65" stroke="#00ff00"/>
                        <path d="M831 141v41M824 182h15" stroke="#fff"/>
                        <path d="M1480 148h10l6-9M1490 148l7.5 11v11l-8 10h-18l-7-10" stroke="#fff"/>
                        <path d="M569 286v8H1920" stroke="#ff8080"/>
                        <rect x="571.5" y="453.5" width="14" height="32" stroke="#ff8080"/>
                        <g>${this.cadText()}</g>
                        <rect x="1174.5" y="381.5" width="454" height="163" stroke="#ff3b3b" stroke-width="7"/>
                        <path d="M551 889l4 7 4-7M555 896v6" stroke="#00ff00"/>
                        <path d="M555 902l-4 11h8z" fill="#00d000"/>
                    </svg>
                    <div class="float">
                        <div class="floathead">×</div>
                        ${['提取剪力墙边线', '提取墙标识', '提取门窗线', '识别剪力墙'].map((b) => html`<div class="fbtn">${b}</div>`)}
                    </div>
                </div>
            </div>

            <div class="toast">
                <svg class="logoapp" viewBox="0 0 48 48">
                    <defs><linearGradient id="tm" x1="0" y1="0" x2="0" y2="1"><stop offset="0" stop-color="#f5245a"/><stop offset="1" stop-color="#e3124a"/></linearGradient></defs>
                    <rect width="48" height="48" rx="9" fill="url(#tm)"/>
                    <text x="24" y="9" text-anchor="middle" font-size="7" font-weight="700" fill="#fff">11.11</text>
                    <text x="24" y="27" text-anchor="middle" font-size="16" fill="#fff">天猫</text>
                    <text x="24" y="36" text-anchor="middle" font-size="6" fill="#ffe1a0">10周年</text>
                    <path d="M0 38l14-2 10 3 10-3 14 2v10H0z" fill="#111"/>
                    <circle cx="14" cy="45" r="3" fill="#fff"/><circle cx="34" cy="45" r="3" fill="#fff"/>
                </svg>
                <div class="copy"><span class="head">火速加购</span><span class="sub">抢双11大额红包</span></div>
                <div class="dismiss"><span>不再提示</span><b>✕</b></div>
                <div class="adtag">小广告</div>
            </div>
        `;
    }
}
